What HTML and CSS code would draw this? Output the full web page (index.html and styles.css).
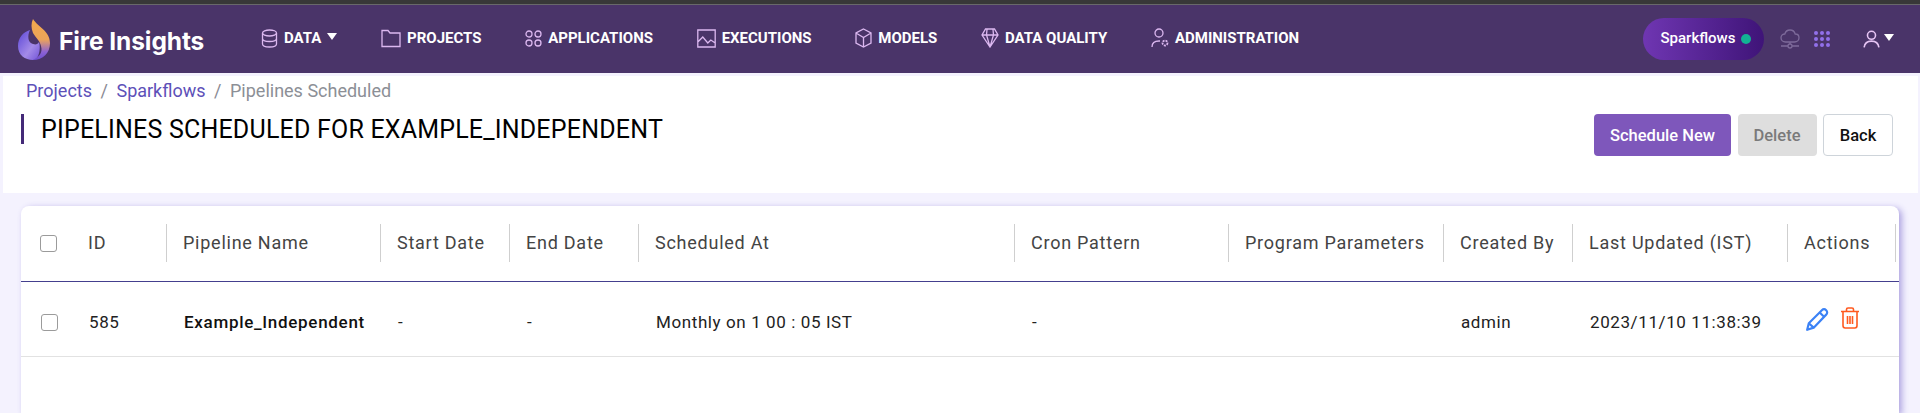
FILE: index.html
```html
<!DOCTYPE html>
<html lang="en">

<head>
    <meta charset="UTF-8">
    <title>Fire Insights</title>
    <link rel="stylesheet" href="styles.css">
</head>

<body>
    <nav class="navbar">
        <a class="brand">
            <svg class="brand-logo" width="34" height="42" viewBox="0 0 34 42">
                <defs>
                    <linearGradient id="flameFill" x1="0" y1="0" x2="0" y2="1">
                        <stop offset="0" stop-color="#f3a94c"/>
                        <stop offset="0.5" stop-color="#eba35a"/>
                        <stop offset="0.8" stop-color="#8d62d4"/>
                        <stop offset="1" stop-color="#6d4fd0"/>
                    </linearGradient>
                    <linearGradient id="ballFill" x1="0" y1="0" x2="1" y2="1">
                        <stop offset="0" stop-color="#5a45d6"/>
                        <stop offset="0.6" stop-color="#a48be8"/>
                        <stop offset="1" stop-color="#7254d8"/>
                    </linearGradient>
                </defs>
                <path d="M1 27C1 19 6 13 13 11C10 17 11 24 16 25C19 26 21 25 22 23C24 29 22 41 16 41C8 41 1 36 1 27Z" fill="url(#ballFill)"/>
                <path d="M16 0C21 8 33 12 33 24C33 34 26 41 16 41C22 38 26 34 24 27C23 22 19 19 16 14C14 9 14 4 16 0Z" fill="url(#flameFill)"/>
            </svg>
            <span class="brand-name">Fire Insights</span>
        </a>
        <ul class="nav-menu">
            <li class="nav-item">
                <svg class="nav-icon" width="17" height="19" viewBox="0 0 17 19"><ellipse cx="8.5" cy="4" rx="7" ry="3"/><path d="M1.5 4v11c0 1.7 3.1 3 7 3s7-1.300 7-3V4M1.500 9.500c0 1.700 3.100 3 7 3s7-1.300 7-3"/></svg>
                DATA <span class="caret"></span>
            </li>
            <li class="nav-item">
                <svg class="nav-icon" width="20" height="19" viewBox="0 0 20 19"><path d="M1 17.500V1.500h6l2 2.500h10v13.500z"/></svg>
                PROJECTS
            </li>
            <li class="nav-item">
                <svg class="nav-icon" width="17" height="19" viewBox="0 0 17 19"><circle cx="4" cy="5" r="3"/><circle cx="13" cy="5" r="3"/><circle cx="4" cy="14" r="3"/><circle cx="13" cy="14" r="3"/></svg>
                APPLICATIONS
            </li>
            <li class="nav-item">
                <svg class="nav-icon" width="19" height="19" viewBox="0 0 19 19"><path d="M.8 1h17.400v17H.8zM.8 13l5-5 5 6 3-3 4.400 3"/></svg>
                EXECUTIONS
            </li>
            <li class="nav-item">
                <svg class="nav-icon" width="17" height="20" viewBox="0 0 17 20"><path d="M8.500 1L16 5v10l-7.500 4L1 15V5zM1 5l7.500 4.500L16 5M8.500 9.500V19"/></svg>
                MODELS
            </li>
            <li class="nav-item">
                <svg class="nav-icon" width="18" height="20" viewBox="0 0 18 20"><path d="M4.500 1h9L17 7l-8 12L1 7zM1 7h16M6 1.500L5.500 7 9 19l3.500-12-.5-5.500"/></svg>
                DATA QUALITY
            </li>
            <li class="nav-item">
                <svg class="nav-icon" width="18" height="20" viewBox="0 0 18 20"><circle cx="8" cy="5" r="4"/><path d="M1 19c0-4 3-6 7-6h1"/><circle class="gear" cx="14" cy="15" r="2.500"/></svg>
                ADMINISTRATION
            </li>
        </ul>
        <div class="nav-right">
            <div class="workspace-pill">Sparkflows <span class="status-dot"></span></div>
            <svg class="cloud-icon" width="20" height="20" viewBox="0 0 20 20"><path d="M5.500 13C3 13 1 11.200 1 8.800S2.800 5 4.800 5C5.500 2.500 7.500 1 10 1s4.500 1.500 5.200 4C17.200 5 19 6.400 19 8.800S17 13 14.500 13zM10 13v2M1 17h7M12 17h7"/><circle cx="10" cy="17" r="2"/></svg>
            <div class="apps-grid">
                <span></span><span></span><span></span><span></span><span></span><span></span><span></span><span></span><span></span>
            </div>
            <div class="user-menu">
                <svg class="user-icon" width="17" height="18" viewBox="0 0 16 17"><circle cx="8" cy="5" r="3.800"/><path d="M1 16.500c.500-4 3.200-6 7-6s6.500 2 7 6"/></svg>
                <span class="caret"></span>
            </div>
        </div>
    </nav>

    <header class="page-header">
        <div class="page-header-left">
            <div class="breadcrumb">
                <a>Projects</a><span class="crumb-sep">/</span><a>Sparkflows</a><span class="crumb-sep">/</span><span class="crumb-current">Pipelines Scheduled</span>
            </div>
            <h1 class="page-title">PIPELINES SCHEDULED FOR EXAMPLE_INDEPENDENT</h1>
        </div>
        <div class="page-actions">
            <button class="btn btn-primary">Schedule New</button>
            <button class="btn btn-disabled">Delete</button>
            <button class="btn btn-plain">Back</button>
        </div>
    </header>

    <section class="table-card">
        <div class="table-row table-head">
            <div class="cell cell-check"><span class="checkbox"></span></div>
            <div class="cell">ID</div>
            <div class="cell">Pipeline Name</div>
            <div class="cell">Start Date</div>
            <div class="cell">End Date</div>
            <div class="cell">Scheduled At</div>
            <div class="cell">Cron Pattern</div>
            <div class="cell">Program Parameters</div>
            <div class="cell">Created By</div>
            <div class="cell">Last Updated (IST)</div>
            <div class="cell">Actions</div>
        </div>
        <div class="table-row table-body">
            <div class="cell cell-check"><span class="checkbox"></span></div>
            <div class="cell">585</div>
            <div class="cell cell-name">Example_Independent</div>
            <div class="cell">-</div>
            <div class="cell">-</div>
            <div class="cell">Monthly on 1 00 : 05 IST</div>
            <div class="cell">-</div>
            <div class="cell"></div>
            <div class="cell">admin</div>
            <div class="cell">2023/11/10 11:38:39</div>
            <div class="cell cell-actions">
                <svg class="edit-svg" width="25" height="25" viewBox="0 0 23 23"><path class="edit-icon" d="M2 21l1.500-6L15.500 3c1.200-1.200 2.800-1.200 4 0s1.200 2.800 0 4L8 19zM13.500 5l4.500 4.500M3.500 15L8 19"/></svg>
                <svg width="18" height="22" viewBox="0 0 18 22"><path class="trash-icon" d="M0 4.500h18M5.500 4.500V2.500c0-1 .5-1.500 1.500-1.500h4c1 0 1.500.5 1.500 1.500v2M2 4.500v14c0 1.500.8 2.500 2.200 2.500h9.600c1.400 0 2.200-1 2.200-2.500v-14M6.500 9v8M9 9v8M11.500 9v8"/></svg>
            </div>
        </div>
    </section>
</body>

</html>
```

FILE: styles.css
```css
* {
    box-sizing: border-box;
}

html,
body {
    height: 413px;
    overflow: hidden;
}

body {
    margin: 0;
    background-color: #f4f2fe;
    font-family: Roboto, Arial, sans-serif;
}

.navbar {
    display: flex;
    align-items: center;
    height: 73px;
    padding: 0 26px 0 17px;
    background-color: #4a3469;
    border-top: 4px solid #383838;
    box-shadow: inset 0 1px 0 #68686a;
    color: #fff;
}

.brand {
    display: flex;
    align-items: center;
    gap: 8px;
    width: 244px;
}

.brand-logo {
    margin-top: 3px;
}

.brand-name {
    margin-top: 4px;
    font-family: Inter, "Open Sans", sans-serif;
    font-size: 24.5px;
    font-weight: 700;
    letter-spacing: -0.1px;
    white-space: nowrap;
}

.nav-menu {
    display: flex;
    gap: 43.7px;
    margin: 1px 0 0;
    padding: 0;
    list-style: none;
}

.nav-item {
    display: flex;
    align-items: center;
    gap: 6px;
    margin-top: -2px;
    font-size: 15px;
    font-weight: 700;
    white-space: nowrap;
}

.nav-item .caret {
    margin-top: -4px;
}

.nav-icon {
    fill: none;
    stroke: #dcb8f0;
    stroke-width: 1.300;
}

.nav-icon .gear {
    stroke-width: 1.800;
    stroke-dasharray: 2 1;
}

.caret {
    display: inline-block;
    width: 0;
    height: 0;
    border-left: 5px solid transparent;
    border-right: 5px solid transparent;
    border-top: 7px solid #fff;
}

.nav-right {
    display: flex;
    align-items: center;
    margin-left: auto;
    margin-top: 1px;
}

.workspace-pill {
    display: flex;
    align-items: center;
    justify-content: center;
    gap: 6px;
    width: 121px;
    height: 42px;
    padding: 0 0 3px 5px;
    border-radius: 21px;
    background: linear-gradient(90deg, #6f36b2, #3f1478);
    font-size: 15px;
    font-weight: 500;
}

.status-dot {
    width: 10px;
    height: 10px;
    margin-top: 3px;
    border-radius: 50%;
    background-color: #12b294;
}

.cloud-icon {
    margin-left: 16px;
    fill: none;
    stroke: #7d6a9a;
    stroke-width: 1.300;
}

.apps-grid {
    display: grid;
    grid-template-columns: repeat(3, 4px);
    gap: 2px;
    margin-left: 14px;
}

.apps-grid span {
    width: 4px;
    height: 4px;
    border-radius: 50%;
    background-color: #9270ea;
}

.user-menu {
    display: flex;
    align-items: center;
    gap: 4px;
    margin-left: 33px;
}

.user-menu .caret {
    margin-top: -4px;
}

.user-icon {
    fill: none;
    stroke: #e6c4f4;
    stroke-width: 1.500;
}

.page-header {
    display: flex;
    justify-content: space-between;
    height: 117px;
    margin: 3px 2px 0 3px;
    padding: 0 25px 0 18px;
    background-color: #fff;
}

.breadcrumb {
    padding: 5px 0 0 5px;
    font-size: 18px;
    line-height: 20px;
    color: #5d50b8;
}

.crumb-sep {
    margin: 0 8.5px;
    color: #8a8a94;
}

.crumb-current {
    color: #8c8f96;
}

.page-title {
    height: 30px;
    margin: 13px 0 0;
    padding: 1px 0 0 17px;
    border-left: 3px solid #442a78;
    font-size: 25px;
    font-weight: 400;
    letter-spacing: 0.2px;
    line-height: 30px;
    color: #000;
    white-space: nowrap;
}

.page-actions {
    display: flex;
    gap: 6.5px;
    padding-top: 38px;
}

.btn {
    height: 42px;
    border: 1px solid transparent;
    border-radius: 4px;
    font-family: Roboto, Arial, sans-serif;
    font-size: 16.5px;
    font-weight: 500;
}

.btn-primary {
    width: 137px;
    background-color: #7e57bb;
    color: #fff;
}

.btn-disabled {
    width: 79px;
    background-color: #dedede;
    color: #7a7a7a;
}

.btn-plain {
    width: 70px;
    background-color: #fff;
    border-color: #ced4da;
    color: #111;
}

.table-card {
    height: 207px;
    margin: 13px 21px 0 21px;
    background-color: #fff;
    border-radius: 8px 8px 0 0;
    box-shadow: 3px 2px 6px rgba(90, 70, 190, 0.45);
}

.table-row {
    display: grid;
    grid-template-columns: 51px 95px 214px 129px 129px 376px 214px 215px 129px 215px 108px;
    align-items: center;
}

.table-head {
    height: 76px;
    border-bottom: 1px solid #443f8e;
    color: #444;
    font-size: 18px;
    letter-spacing: 0.75px;
}

.table-head .cell {
    height: 38px;
    margin-top: -1px;
    padding-left: 16px;
    border-right: 1px solid #cfcfcf;
    line-height: 38px;
}

.table-head .cell-check {
    padding-left: 19px;
    border-right: 0;
}

.table-body {
    height: 75px;
    padding-top: 6px;
    border-bottom: 1px solid #e2e2e2;
    color: #222;
    font-size: 17px;
    letter-spacing: 0.6px;
}

.cell {
    padding-left: 17px;
    white-space: nowrap;
}

.cell-check {
    display: flex;
    align-items: center;
    padding-left: 19px;
}

.table-body .cell-check {
    padding-left: 20px;
}

.checkbox {
    width: 17px;
    height: 17px;
    border: 1px solid #9b9b9b;
    border-radius: 3px;
    background-color: #fff;
}

.cell-name {
    font-weight: 500;
    letter-spacing: 0.7px;
    color: #111;
}

.cell-actions {
    display: flex;
    align-items: center;
    gap: 11px;
    margin-top: -9px;
}

.edit-svg {
    margin-top: 3px;
}

.edit-icon {
    fill: none;
    stroke: #3b82f6;
    stroke-width: 2;
    stroke-linejoin: round;
}

.trash-icon {
    fill: none;
    stroke: #ff5a1f;
    stroke-width: 1.600;
}
```
